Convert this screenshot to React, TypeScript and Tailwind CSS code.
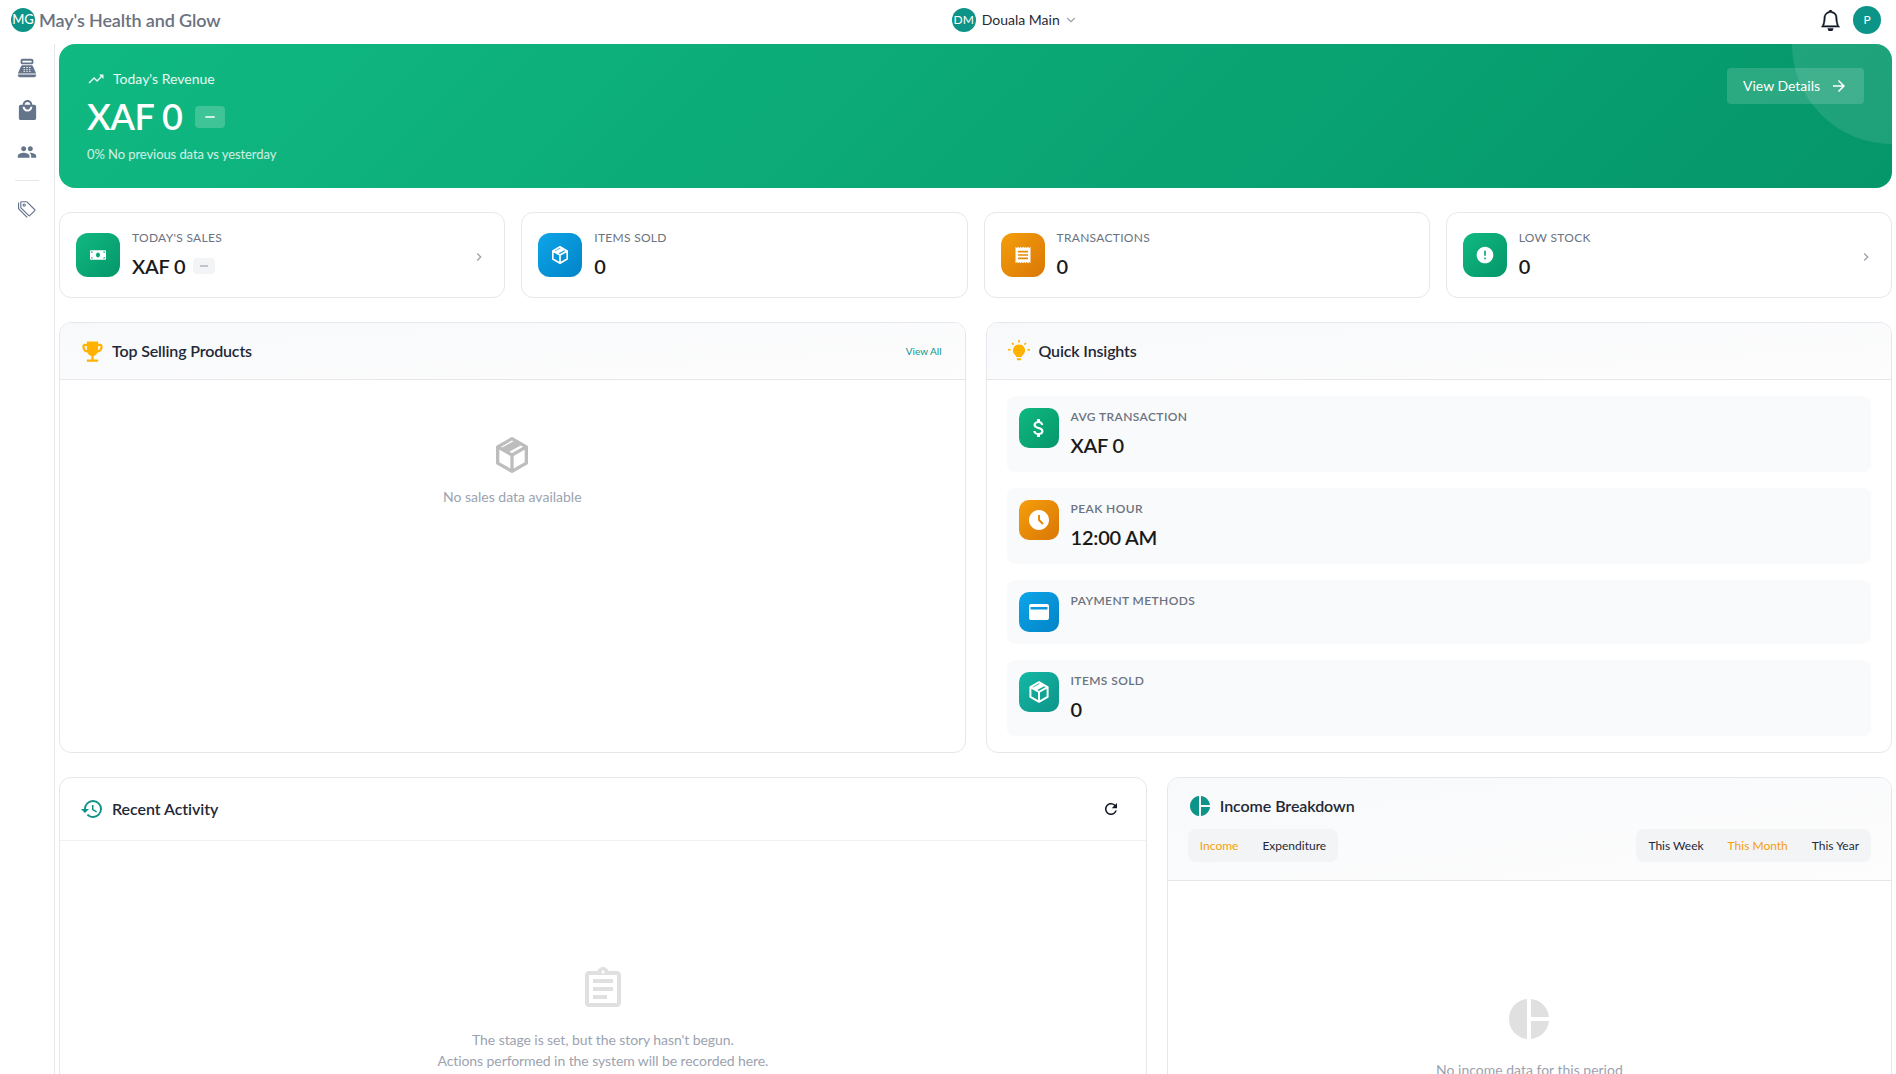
// Dashboard screen: top bar, icon rail, revenue banner, stat cards, insights

import type { ReactNode } from "react";
import { BsBell, BsTags } from "react-icons/bs";
import { FaMoneyBill } from "react-icons/fa";
import { LuChevronDown } from "react-icons/lu";
import {
  MdAccessTimeFilled,
  MdArrowForward,
  MdAttachMoney,
  MdChevronRight,
  MdEmojiEvents,
  MdError,
  MdHistory,
  MdLocalMall,
  MdOutlineAssignment,
  MdPeople,
  MdPieChart,
  MdPointOfSale,
  MdReceipt,
  MdRefresh,
  MdRemove,
  MdTrendingUp,
} from "react-icons/md";

function CardGlyph() {
  return (
    <svg viewBox="0 0 20 16" className="w-[20px] h-[16px]" fill="none">
      <path
        fillRule="evenodd"
        clipRule="evenodd"
        d="M2 0h16a2 2 0 0 1 2 2v12a2 2 0 0 1-2 2H2a2 2 0 0 1-2-2V2a2 2 0 0 1 2-2zM1.5 3v2.5h17V3h-17z"
        fill="#ffffff"
      />
    </svg>
  );
}

function BulbGlyph() {
  return (
    <svg viewBox="0 0 24 24" className="w-6 h-6 text-[#ffb300]" fill="currentColor">
      <path d="M12 5.5a6 6 0 0 0-3.5 10.9c.5.4.8.9.9 1.6h5.2c.1-.7.4-1.2.9-1.6A6 6 0 0 0 12 5.5z" />
      <rect x="9.8" y="19.3" width="4.4" height="2" rx="0.8" />
      <rect x="11.2" y="1" width="1.6" height="2.6" />
      <rect x="1" y="10" width="2.6" height="1.6" />
      <rect x="20.4" y="10" width="2.6" height="1.6" />
      <path d="M5 4l1.6 1.6" stroke="currentColor" strokeWidth="1.6" />
      <path d="M19 4l-1.6 1.6" stroke="currentColor" strokeWidth="1.6" />
    </svg>
  );
}

function BoxGlyph({ size, className }: { size: number; className?: string }) {
  return (
    <svg width={size} height={size} viewBox="0 0 24 24" className={className} fill="none">
      <path
        d="M12 2.2l8.6 4.9v9.8L12 21.8l-8.6-4.9V7.1zM3.4 7.1L12 12l8.6-4.9M12 12v9.8"
        stroke="currentColor"
        strokeWidth="2"
        strokeLinejoin="round"
      />
      <path d="M14 3.1l4.5 2.5-9 5-4.5-2.5z" fill="currentColor" />
    </svg>
  );
}

function StatCard({
  icon,
  tone,
  label,
  value,
  badge,
  arrow,
}: {
  icon: ReactNode;
  tone: string;
  label: string;
  value: string;
  badge?: boolean;
  arrow?: boolean;
}) {
  return (
    <div className="h-[86px] bg-white border border-[#e5e7eb] rounded-xl px-4 flex items-center gap-3">
      <div className={`w-11 h-11 rounded-xl flex items-center justify-center text-white shrink-0 ${tone}`}>
        {icon}
      </div>
      <div className="flex-1 min-w-0">
        <div className="text-xs leading-4 tracking-[0.3px] uppercase text-[#6b7280]">{label}</div>
        <div className="mt-[6px] flex items-center gap-2">
          <span className="text-xl leading-7 font-semibold tracking-[-0.2px] text-[#1a1a1a]">{value}</span>
          {badge && (
            <span className="w-[22px] h-4 rounded bg-[#f3f4f6] flex items-center justify-center text-[#9ca3af]">
              <MdRemove size={14} />
            </span>
          )}
        </div>
      </div>
      {arrow && <MdChevronRight size={16} className="text-[#9ca3af] mt-[3px] mr-px" />}
    </div>
  );
}

function InsightRow({
  icon,
  tone,
  label,
  value,
}: {
  icon: ReactNode;
  tone: string;
  label: string;
  value?: string;
}) {
  return (
    <div className="bg-[#f9fafb] rounded-lg p-3 flex gap-3">
      <div className={`w-10 h-10 rounded-[10px] flex items-center justify-center text-white shrink-0 ${tone}`}>
        {icon}
      </div>
      <div>
        <div className="text-xs leading-[18px] font-semibold tracking-[0.4px] uppercase text-[#6b7280]">{label}</div>
        {value && (
          <div className="mt-[5px] mb-px text-xl leading-7 font-semibold tracking-[-0.2px] text-[#1a1a1a]">{value}</div>
        )}
      </div>
    </div>
  );
}

function TabGroup({ items, active }: { items: string[]; active: string }) {
  return (
    <div className="h-[33px] flex items-center rounded-lg bg-[#f3f4f6]">
      {items.map((item) => (
        <span
          key={item}
          className={`px-3 text-xs ${item === active ? "text-[#f59e0b]" : "text-[#1f2937]"}`}
        >
          {item}
        </span>
      ))}
    </div>
  );
}

function RailIcon({ children }: { children: ReactNode }) {
  return <span className="h-6 flex items-center justify-center text-[#64748b]">{children}</span>;
}

export default function App() {
  return (
    <div className="h-screen overflow-hidden bg-white font-[Lato,sans-serif] flex flex-col">
      {/* Top bar */}
      <header className="h-11 shrink-0 flex items-center justify-between pl-[11px] pr-[15px] pb-1">
        <div className="flex items-center gap-1">
          <div className="w-6 h-6 rounded-full bg-[#0d9488] flex items-center justify-center text-white text-[13px] font-medium">
            MG
          </div>
          <span className="text-lg font-semibold tracking-[-0.12px] text-[#6b7280]">May's Health and Glow</span>
        </div>
        <div className="flex items-center gap-[6px] pr-[2px]">
          <div className="w-6 h-6 rounded-full bg-[#0d9488] flex items-center justify-center text-white text-xs">
            DM
          </div>
          <span className="text-sm text-[#1f2937]">Douala Main</span>
          <LuChevronDown size={14} className="text-[#9ca3af] -ml-[2px]" />
        </div>
        <div className="flex items-center gap-[2px]">
          <div className="w-10 h-10 flex items-center justify-center text-[#111827]">
            <BsBell size={21} stroke="currentColor" strokeWidth={0.4} />
          </div>
          <div className="w-7 h-7 rounded-full bg-[#0d9488] flex items-center justify-center text-white text-xs">
            P
          </div>
        </div>
      </header>

      <div className="flex-1 flex min-h-0">
        {/* Icon rail */}
        <aside className="w-[55px] shrink-0 border-r border-[#e5e7eb] flex flex-col items-center pt-[12px] gap-[18px]">
          <RailIcon>
            <MdPointOfSale size={22} />
          </RailIcon>
          <RailIcon>
            <MdLocalMall size={23} />
          </RailIcon>
          <RailIcon>
            <MdPeople size={20} />
          </RailIcon>
          <div className="w-6 h-px bg-[#e5e7eb] -my-[2px]" />
          <RailIcon>
            <BsTags size={18} />
          </RailIcon>
        </aside>

        <main className="flex-1 min-w-0 pl-1 pr-1">
          {/* Revenue banner */}
          <section className="relative h-[144px] overflow-hidden rounded-2xl bg-[linear-gradient(135deg,#10b981,#059669)] pl-7 pr-7 pt-6 flex justify-between items-start text-white">
            <div className="absolute -top-[100px] -right-[100px] w-[200px] h-[200px] rounded-full bg-white/10" />
            <div>
              <div className="flex items-center h-[22px] gap-2 text-sm text-white/90">
                <MdTrendingUp size={18} />
                <span>Today's Revenue</span>
              </div>
              <div className="mt-1 flex items-center gap-[13px]">
                <span className="text-4xl leading-[44px] font-semibold tracking-[-0.5px]">XAF 0</span>
                <span className="w-[30px] h-[22px] rounded bg-white/20 flex items-center justify-center mt-[1px]">
                  <MdRemove size={16} />
                </span>
              </div>
              <div className="mt-[6px] text-[13px] leading-5 tracking-[-0.08px] text-white/80">
                0% No previous data vs yesterday
              </div>
            </div>
            <button className="relative h-9 w-[137px] rounded bg-white/15 flex items-center justify-center gap-[10px] text-sm">
              <span>View Details</span>
              <MdArrowForward size={18} />
            </button>
          </section>

          {/* Stat cards */}
          <section className="mt-6 grid grid-cols-4 gap-4">
            <StatCard
              tone="bg-gradient-to-br from-[#10b981] to-[#059669]"
              icon={<FaMoneyBill size={16} />}
              label="Today's Sales"
              value="XAF 0"
              badge
              arrow
            />
            <StatCard
              tone="bg-gradient-to-br from-[#0ea5e9] to-[#0284c7]"
              icon={<BoxGlyph size={20} />}
              label="Items Sold"
              value="0"
            />
            <StatCard
              tone="bg-gradient-to-br from-[#f59e0b] to-[#d97706]"
              icon={<MdReceipt size={20} />}
              label="Transactions"
              value="0"
            />
            <StatCard
              tone="bg-gradient-to-br from-[#10b981] to-[#059669]"
              icon={<MdError size={20} />}
              label="Low Stock"
              value="0"
              arrow
            />
          </section>

          {/* Top selling and insights */}
          <section className="mt-6 grid grid-cols-2 gap-5">
            <div className="h-[431px] border border-[#e5e7eb] rounded-xl overflow-hidden">
              <div className="h-[57px] px-5 flex items-center justify-between border-b border-[#e5e7eb] bg-gradient-to-br from-[#f8f9fb] to-[#fdfdfd]">
                <div className="flex items-center gap-2">
                  <span className="w-6 h-6 flex items-center justify-center">
                    <MdEmojiEvents size={27} className="text-[#ffb300] shrink-0" />
                  </span>
                  <h2 className="text-base font-semibold tracking-[-0.15px] text-[#1f2937]">Top Selling Products</h2>
                </div>
                <span className="text-[10px] text-[#0d9488] mr-[3px]">View All</span>
              </div>
              <div className="pt-[55px] flex flex-col items-center">
                <BoxGlyph size={40} className="text-[#bdbdbd]" />
                <p className="mt-[11px] text-sm leading-[21px] text-[#9ca3af]">No sales data available</p>
              </div>
            </div>

            <div className="h-[431px] border border-[#e5e7eb] rounded-xl overflow-hidden">
              <div className="h-[57px] px-5 flex items-center gap-2 border-b border-[#e5e7eb] bg-gradient-to-br from-[#f8f9fb] to-[#fdfdfd]">
                <BulbGlyph />
                <h2 className="text-base font-semibold tracking-[-0.15px] text-[#1f2937]">Quick Insights</h2>
              </div>
              <div className="px-5 py-4 flex flex-col gap-4">
                <InsightRow
                  tone="bg-gradient-to-br from-[#10b981] to-[#059669]"
                  icon={<MdAttachMoney size={24} />}
                  label="Avg Transaction"
                  value="XAF 0"
                />
                <InsightRow
                  tone="bg-gradient-to-br from-[#f59e0b] to-[#d97706]"
                  icon={<MdAccessTimeFilled size={24} />}
                  label="Peak Hour"
                  value="12:00 AM"
                />
                <InsightRow
                  tone="bg-gradient-to-br from-[#0ea5e9] to-[#0284c7]"
                  icon={<CardGlyph />}
                  label="Payment Methods"
                />
                <InsightRow
                  tone="bg-gradient-to-br from-[#14b8a6] to-[#0d9488]"
                  icon={<BoxGlyph size={24} />}
                  label="Items Sold"
                  value="0"
                />
              </div>
            </div>
          </section>

          {/* Activity and income */}
          <section className="mt-6 grid grid-cols-[3fr_2fr] gap-5">
            <div className="h-[420px] border border-[#e5e7eb] rounded-xl overflow-hidden">
              <div className="h-[63px] px-5 flex items-center justify-between border-b border-[#f0f0f0]">
                <div className="flex items-center gap-2">
                  <MdHistory size={24} className="text-[#0d9488]" />
                  <h2 className="text-base font-semibold tracking-[-0.05px] text-[#1f2937]">Recent Activity</h2>
                </div>
                <MdRefresh size={18} className="text-[#111827] mr-[6px]" />
              </div>
              <div className="pt-[124px] flex flex-col items-center">
                <MdOutlineAssignment size={48} className="text-[#e0e0e0]" />
                <p className="mt-4 text-sm leading-[21px] tracking-[-0.08px] text-[#9ca3af] text-center">
                  The stage is set, but the story hasn't begun.
                  <br />
                  Actions performed in the system will be recorded here.
                </p>
              </div>
            </div>

            <div className="h-[420px] border border-[#e5e7eb] rounded-xl overflow-hidden">
              <div className="h-[103px] px-5 pt-4 border-b border-[#e5e7eb] bg-gradient-to-br from-[#f8f9fb] to-[#fdfdfd]">
                <div className="flex items-center gap-2">
                  <MdPieChart size={24} className="text-[#0d9488]" />
                  <h2 className="text-base font-semibold tracking-[-0.08px] text-[#1f2937]">Income Breakdown</h2>
                </div>
                <div className="mt-[11px] flex items-center justify-between">
                  <TabGroup items={["Income", "Expenditure"]} active="Income" />
                  <TabGroup items={["This Week", "This Month", "This Year"]} active="This Month" />
                </div>
              </div>
              <div className="pt-[114px] flex flex-col items-center">
                <MdPieChart size={48} className="text-[#e0e0e0]" />
                <p className="mt-4 text-sm leading-[21px] text-[#9ca3af]">No income data for this period</p>
              </div>
            </div>
          </section>
        </main>
      </div>
    </div>
  );
}
